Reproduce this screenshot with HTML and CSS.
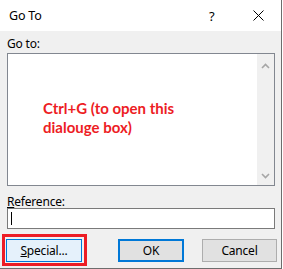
FILE: index.html
```html
<!DOCTYPE html>
<html lang="en">
<head>
  <meta charset="UTF-8">
  <title>Go To</title>
  <link rel="stylesheet" href="styles.css">
</head>
<body>
  <div class="dialog">
    <div class="titlebar">
      <span class="title">Go To</span>
      <span class="help">?</span>
      <svg class="close" width="11" height="11" viewBox="0 0 11 11">
        <path d="M0.5 0.5 L10.5 10.5 M10.5 0.5 L0.5 10.5" stroke="#000" stroke-width="1" fill="none"/>
      </svg>
    </div>

    <div class="content">
      <div class="label">Go to:</div>
      <div class="listbox">
        <div class="items">
          <p class="note">Ctrl+G (to open this<br>dialouge box)</p>
        </div>
        <div class="scrollbar">
          <svg width="9" height="6" viewBox="0 0 9 6"><path d="M1 5 L4.5 1.5 L8 5" stroke="#a6a6a6" stroke-width="1.6" fill="none"/></svg>
          <svg width="9" height="6" viewBox="0 0 9 6"><path d="M1 1 L4.5 4.5 L8 1" stroke="#a6a6a6" stroke-width="1.6" fill="none"/></svg>
        </div>
      </div>

      <div class="label ref-label"><u>R</u>eference:</div>
      <div class="input"><span class="caret"></span></div>
    </div>

    <div class="buttons">
      <div class="highlight">
        <button class="btn btn-special"><u>S</u>pecial...</button>
      </div>
      <button class="btn btn-ok">OK</button>
      <button class="btn btn-cancel">Cancel</button>
    </div>
  </div>
</body>
</html>
```

FILE: styles.css
```css
body { margin: 0; background: #fff; font-family: "Noto Sans", "Open Sans", sans-serif; font-size: 12px; letter-spacing: -0.2px; color: #000; }
.dialog { width: 281px; height: 268px; background: #f0f0f0; border-right: 1px solid #6d6d6d; border-bottom: 1px solid #6d6d6d; display: flex; flex-direction: column; }

.titlebar { height: 31px; background: #fff; display: flex; align-items: center; padding-left: 9px; flex-shrink: 0; }
.title { flex: 1; font-size: 12.5px; }
.help { width: 8px; margin-right: 36px; font-size: 13px; }
.close { margin-right: 17px; }

.content { padding: 5px 6px 0 7px; }
.label { height: 17px; line-height: 15px; }
.ref-label { margin-top: 9px; height: 13px; line-height: 13px; }

.listbox { height: 131px; border: 1px solid #828790; background: #fff; display: flex; }
.items { flex: 1; padding: 45px 0 0 35px; }
.note { margin: 0; font-family: Lato, sans-serif; font-weight: bold; font-size: 15px; line-height: 19px; letter-spacing: 0; color: #ed1c24; }
.scrollbar { width: 17px; background: #f0f0f0; display: flex; flex-direction: column; justify-content: space-between; align-items: center; padding: 9px 0 6px; box-sizing: border-box; }

.input { height: 19px; border: 1px solid #7a7a7a; background: #fff; display: flex; align-items: center; padding-left: 3px; }
.caret { width: 1px; height: 13px; background: #000; }

.buttons { display: flex; align-items: flex-start; padding: 5px 0 0 2px; }
.highlight { border: 3px solid #ed1c24; padding: 2px 2px 1px 1px; }
.btn { font-family: inherit; font-size: 12px; letter-spacing: inherit; height: 23px; padding: 0; background: #e1e1e1; border: 1px solid #adadad; color: #000; }
.btn-special { width: 76px; background: #e5f1fb; border-color: #0078d7; display: block; }
.btn-ok { width: 66px; margin: 5px 0 0 31px; border: 2px solid #0078d7; }
.btn-cancel { width: 75px; margin: 5px 0 0 18px; }
```
